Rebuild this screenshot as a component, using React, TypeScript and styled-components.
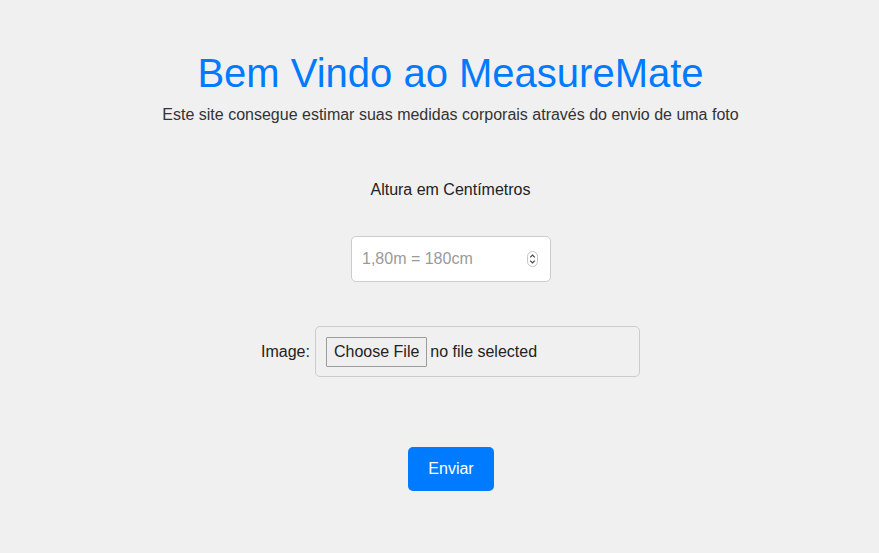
import styled, { createGlobalStyle } from 'styled-components';

const GlobalStyle = createGlobalStyle`
  html, body {
    margin: 0;
    padding: 0;
    background: #f0f0f0;
    font-family: "Liberation Sans", Arial, sans-serif;
  }
`;

const Page = styled.div`
  min-height: 553px;
  padding: 50px 0 0 22px;
  box-sizing: border-box;
  display: flex;
  flex-direction: column;
  align-items: center;
  color: #222;
`;

const Title = styled.h1`
  margin: 0;
  font-size: 40px;
  font-weight: normal;
  line-height: 46px;
  color: #007bff;
`;

const Subtitle = styled.p`
  margin: 10px 0 0;
  font-size: 16px;
  line-height: 18px;
  color: #333;
`;

const Form = styled.form`
  margin-top: 57px;
  display: flex;
  flex-direction: column;
  align-items: center;
`;

const FieldLabel = styled.label`
  font-size: 16px;
  line-height: 18px;
  color: #222;
`;

const NumberBox = styled.div`
  margin-top: 37px;
  margin-left: 1px;
  width: 200px;
  height: 46px;
  box-sizing: border-box;
  border: 1px solid #ccc;
  border-radius: 5px;
  background: #fff;
  display: flex;
  align-items: center;
  padding: 0 12px 0 10px;
`;

const NumberInput = styled.input`
  flex: 1;
  min-width: 0;
  border: none;
  outline: none;
  background: transparent;
  font-family: inherit;
  font-size: 16px;
  color: #222;
  padding: 0;
  &::placeholder {
    color: #9a9a9a;
  }
  &::-webkit-inner-spin-button,
  &::-webkit-outer-spin-button {
    -webkit-appearance: none;
    margin: 0;
  }
  -moz-appearance: textfield;
`;

const Spinner = styled.svg`
  flex: none;
  width: 11px;
  height: 16px;
`;

const ImageRow = styled.div`
  margin-top: 44px;
  display: flex;
  align-items: center;
  gap: 5px;
`;

const FileBox = styled.div`
  width: 325px;
  height: 51px;
  box-sizing: border-box;
  border: 1px solid #ccc;
  border-radius: 5px;
  padding: 10px;
  display: flex;
  align-items: center;
  gap: 3px;
`;

const HiddenFile = styled.input`
  display: none;
`;

const ChooseButton = styled.label`
  height: 30px;
  box-sizing: border-box;
  padding: 0 7px;
  display: flex;
  align-items: center;
  background: #efefef;
  border: 1px solid #9c9c9c;
  border-radius: 1px;
  font-size: 16px;
  color: #222;
  cursor: pointer;
`;

const FileText = styled.span`
  font-size: 16px;
  color: #222;
`;

const SubmitButton = styled.button`
  margin-top: 70px;
  margin-left: 1px;
  height: 44px;
  padding: 0 20px;
  border: none;
  border-radius: 5px;
  background: #007bff;
  color: #fff;
  font-family: inherit;
  font-size: 16px;
  cursor: pointer;
`;

export default function App() {
  return (
    <>
      <GlobalStyle />
      <Page>
        <Title>Bem Vindo ao MeasureMate</Title>
        <Subtitle>Este site consegue estimar suas medidas corporais através do envio de uma foto</Subtitle>
        <Form onSubmit={e => e.preventDefault()}>
          <FieldLabel htmlFor="altura">Altura em Centímetros</FieldLabel>
          <NumberBox>
            <NumberInput id="altura" type="number" placeholder="1,80m = 180cm" />
            <Spinner viewBox="0 0 11 16">
              <rect x="0.5" y="0.5" width="10" height="15" rx="5" fill="#fff" stroke="#c4c4c4" />
              <path d="M3.2 6.3 L5.5 4 L7.8 6.3" fill="none" stroke="#444" strokeWidth="1.2" />
              <path d="M3.2 9.7 L5.5 12 L7.8 9.7" fill="none" stroke="#444" strokeWidth="1.2" />
            </Spinner>
          </NumberBox>
          <ImageRow>
            <FieldLabel htmlFor="imagem">Image:</FieldLabel>
            <FileBox>
              <HiddenFile id="imagem" type="file" accept="image/*" />
              <ChooseButton htmlFor="imagem">Choose File</ChooseButton>
              <FileText>no file selected</FileText>
            </FileBox>
          </ImageRow>
          <SubmitButton type="submit">Enviar</SubmitButton>
        </Form>
      </Page>
    </>
  );
}
